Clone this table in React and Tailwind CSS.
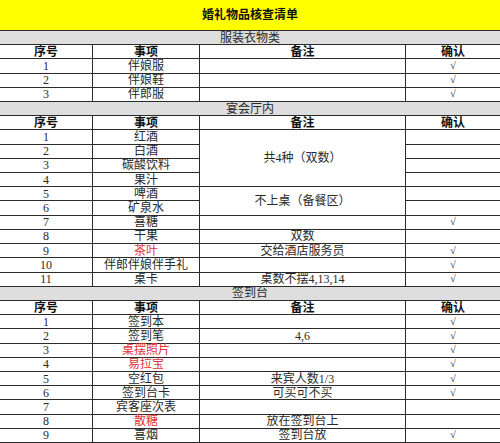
import React from "react";

const FONT = { fontFamily: '"Liberation Serif", "Noto Sans CJK SC", serif' };

function C({ children, className = "", last = false }) {
  return (
    <div
      className={
        "flex items-center justify-center border-b border-[#2b2b2b] text-[12px] leading-none text-[#2a2a2a] whitespace-nowrap " +
        (last ? "" : "border-r ") +
        className
      }
    >
      {children}
    </div>
  );
}

function Section({ title }) {
  return (
    <div className="col-span-4 flex items-center justify-center border-b border-[#2b2b2b] bg-[#dedede] text-[12px] leading-none text-[#2a2a2a]">
      {title}
    </div>
  );
}

function Header() {
  return (
    <>
      <C className="font-bold text-[#111]">序号</C>
      <C className="font-bold text-[#111]">事项</C>
      <C className="font-bold text-[#111]">备注</C>
      <C className="font-bold text-[#111]" last>确认</C>
    </>
  );
}

const Check = () => <span className="text-[10px] text-[#222]">√</span>;

function Row({ n, item, note, check, red, skipNote }) {
  return (
    <>
      <C>{n}</C>
      <C className={red ? "text-[#e2343a]" : ""}>{item}</C>
      {skipNote ? null : <C>{note}</C>}
      <C last>{check ? <Check /> : null}</C>
    </>
  );
}

export default function App() {
  return (
    <div
      className="grid h-[443px] w-[500px] grid-cols-[93px_107px_206px_94px] grid-rows-[31px_repeat(29,1fr)] bg-white"
      style={FONT}
    >
      <div className="col-span-4 flex items-center justify-center border-b border-[#2b2b2b] bg-[#ffff00] text-[12px] font-bold text-[#111]">
        婚礼物品核查清单
      </div>

      <Section title="服装衣物类" />
      <Header />
      <Row n="1" item="伴娘服" check />
      <Row n="2" item="伴娘鞋" check />
      <Row n="3" item="伴郎服" check />

      <Section title="宴会厅内" />
      <Header />
      <C>1</C>
      <C>红酒</C>
      <C className="row-span-4">共4种（双数）</C>
      <C last />
      <Row n="2" item="白酒" skipNote />
      <Row n="3" item="碳酸饮料" skipNote />
      <Row n="4" item="果汁" skipNote />
      <C>5</C>
      <C>啤酒</C>
      <C className="row-span-2">不上桌（备餐区）</C>
      <C last />
      <Row n="6" item="矿泉水" skipNote />
      <Row n="7" item="喜糖" check />
      <Row n="8" item="干果" note="双数" />
      <Row n="9" item="茶叶" note="交给酒店服务员" check red />
      <Row n="10" item="伴郎伴娘伴手礼" check />
      <Row n="11" item="桌卡" note="桌数不摆4,13,14" check />

      <Section title="签到台" />
      <Header />
      <Row n="1" item="签到本" check />
      <Row n="2" item="签到笔" note="4,6" check />
      <Row n="3" item="桌摆照片" check red />
      <Row n="4" item="易拉宝" check red />
      <Row n="5" item="空红包" note="来宾人数1/3" check />
      <Row n="6" item="签到台卡" note="可买可不买" check />
      <Row n="7" item="宾客座次表" />
      <Row n="8" item="散糖" note="放在签到台上" red />
      <Row n="9" item="喜烟" note="签到台放" check />
    </div>
  );
}
